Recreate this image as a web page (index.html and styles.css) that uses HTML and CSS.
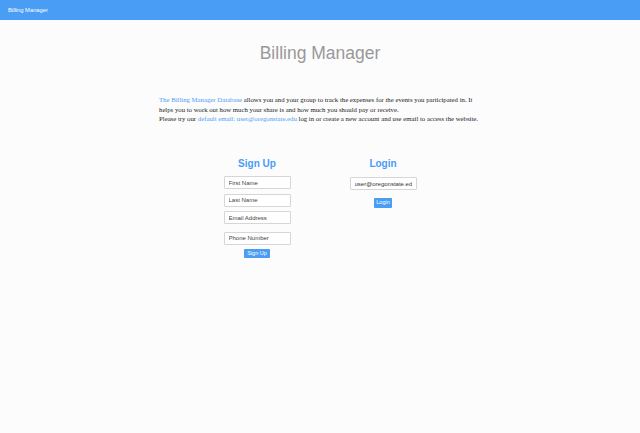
FILE: index.html
```html
<!DOCTYPE html>
<html>
<head>
<meta charset="utf-8">
<link rel="stylesheet" href="styles.css">
</head>
<body>
<nav class="navbar"><span class="brand">Billing Manager</span></nav>
<h1 class="title">Billing Manager</h1>
<p class="intro"><a class="link">The Billing Manager Database</a> allows you and your group to track the expenses for the events you participated in. It helps you to work out how much your share is and how much you should pay or receive.<br>Please try our <a class="link">default email: user@oregonstate.edu</a> log in or create a new account and use email to access the website.</p>
<div class="forms">
  <div class="col">
    <h2 class="heading">Sign Up</h2>
    <input class="field" placeholder="First Name">
    <input class="field" placeholder="Last Name">
    <input class="field" placeholder="Email Address">
    <input class="field gap" placeholder="Phone Number">
    <button class="btn">Sign Up</button>
  </div>
  <div class="col">
    <h2 class="heading">Login</h2>
    <input class="field login-field" value="user@oregonstate.edu">
    <button class="btn login">Login</button>
  </div>
</div>
</body>
</html>
```
FILE: styles.css
```css
html, body {
  margin: 0;
  padding: 0;
  background: #fcfcfc;
  font-family: "Liberation Sans", Arial, sans-serif;
}
.navbar {
  height: 20px;
  background: #4a9df5;
  display: flex;
  align-items: center;
  padding-left: 8px;
}
.brand {
  color: #fff;
  font-size: 5.8px;
}
.title {
  margin: 21px 0 0;
  text-align: center;
  font-size: 17.5px;
  font-weight: normal;
  color: #999;
  line-height: 24px;
}
.intro {
  box-sizing: border-box;
  width: 330px;
  padding-left: 4px;
  margin: 30px auto 0;
  font-family: "Liberation Serif", "Times New Roman", serif;
  font-size: 6.75px;
  line-height: 9.5px;
  color: #222;
}
.link {
  color: #4a9df5;
}
.forms {
  display: flex;
  justify-content: center;
  margin-top: 33.5px;
}
.col {
  width: 126px;
  display: flex;
  flex-direction: column;
  align-items: center;
}
.heading {
  margin: 0 0 5px;
  font-size: 10px;
  line-height: 14px;
  color: #4a9df5;
  font-weight: bold;
}
.field {
  box-sizing: border-box;
  width: 67px;
  height: 13px;
  margin: 0 0 4.5px;
  padding: 0 4px;
  border: 1px solid #d6d6d6;
  border-radius: 1px;
  background: #fff;
  font-family: "Liberation Sans", Arial, sans-serif;
  font-size: 6px;
  color: #333;
  outline: none;
}
.field::placeholder {
  color: #444;
}
.field.gap {
  margin-top: 3px;
  margin-bottom: 4px;
}
.login-field {
  margin-top: 1px;
}
.btn {
  box-sizing: border-box;
  height: 9px;
  padding: 0 3px;
  border: none;
  border-radius: 1px;
  background: #4a9df5;
  color: #fff;
  font-family: "Liberation Sans", Arial, sans-serif;
  font-size: 5.5px;
  line-height: 9px;
}
.btn.login {
  height: 10px;
  padding: 0 2.5px;
  margin-top: 3px;
}
```
